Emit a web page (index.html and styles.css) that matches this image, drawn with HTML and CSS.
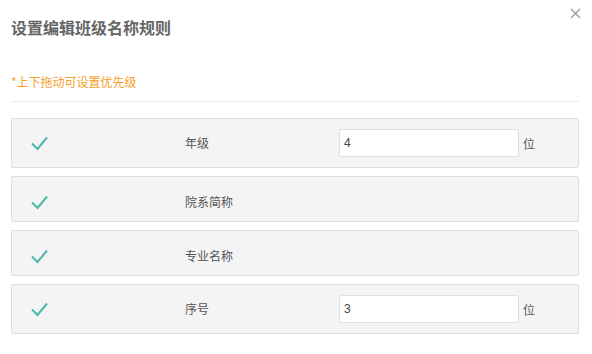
FILE: index.html
```html
<!DOCTYPE html>
<html lang="zh">
<head>
<meta charset="utf-8">
<title>设置编辑班级名称规则</title>
<link rel="stylesheet" href="styles.css">
</head>
<body>
<div class="dialog">
  <button class="close" aria-label="关闭">
    <svg width="11" height="11" viewBox="0 0 11 11"><path d="M1 1L10 10M10 1L1 10" stroke="#9a9a9a" stroke-width="1.4" fill="none"/></svg>
  </button>
  <h1 class="title">设置编辑班级名称规则</h1>
  <p class="hint">*上下拖动可设置优先级</p>
  <ul class="rules">
    <li class="rule has-input">
      <svg class="check" width="17" height="15" viewBox="0 0 17 15"><path d="M1 7.5L6.5 13L16 1.5" stroke="#4cb7a8" stroke-width="2" fill="none"/></svg>
      <span class="label">年级</span>
      <input class="digits" type="text" value="4">
      <span class="unit">位</span>
    </li>
    <li class="rule">
      <svg class="check" width="17" height="15" viewBox="0 0 17 15"><path d="M1 7.5L6.5 13L16 1.5" stroke="#4cb7a8" stroke-width="2" fill="none"/></svg>
      <span class="label">院系简称</span>
    </li>
    <li class="rule">
      <svg class="check" width="17" height="15" viewBox="0 0 17 15"><path d="M1 7.5L6.5 13L16 1.5" stroke="#4cb7a8" stroke-width="2" fill="none"/></svg>
      <span class="label">专业名称</span>
    </li>
    <li class="rule has-input">
      <svg class="check" width="17" height="15" viewBox="0 0 17 15"><path d="M1 7.5L6.5 13L16 1.5" stroke="#4cb7a8" stroke-width="2" fill="none"/></svg>
      <span class="label">序号</span>
      <input class="digits" type="text" value="3">
      <span class="unit">位</span>
    </li>
  </ul>
</div>
</body>
</html>
```
FILE: styles.css
```css
* { box-sizing: border-box; }
html, body {
  margin: 0;
  padding: 0;
  background: #fff;
  font-family: "Noto Sans CJK SC", "Noto Sans", sans-serif;
}
.dialog {
  position: relative;
  width: 592px;
  height: 354px;
  padding: 17px 13px 0 11px;
}
.close {
  position: absolute;
  top: 8px;
  right: 11px;
  padding: 0;
  border: 0;
  background: none;
  width: 11px;
  height: 11px;
  line-height: 0;
}
.title {
  margin: 0;
  font-size: 16px;
  line-height: 20px;
  font-weight: bold;
  color: #666;
}
.hint {
  margin: 37px 0 0;
  padding-bottom: 11px;
  border-bottom: 1px solid #ececec;
  font-size: 12px;
  line-height: 16px;
  color: #f5a02a;
}
.rules {
  list-style: none;
  margin: 16px 0 0;
  padding: 0;
  display: flex;
  flex-direction: column;
  gap: 8px;
}
.rule {
  display: grid;
  grid-template-columns: 154px 154px 180px auto;
  align-items: center;
  height: 46px;
  padding: 14px 0 8px 19px;
  background: #f4f4f4;
  border: 1px solid #d9dde9;
  border-radius: 2px;
  font-size: 12px;
  color: #555;
}
.rule.has-input {
  height: 50px;
  padding: 10px 0 10px 19px;
}
.check { display: block; }
.label { line-height: 22px; }
.digits {
  width: 180px;
  height: 28px;
  margin: 0;
  padding: 0 4px;
  border: 1px solid #e2dfe8;
  border-radius: 2px;
  background: #fff;
  font-family: "Liberation Sans", "Noto Sans", sans-serif;
  font-size: 12px;
  color: #444;
  outline: none;
}
.unit {
  margin-left: 4px;
  color: #555;
}
```
